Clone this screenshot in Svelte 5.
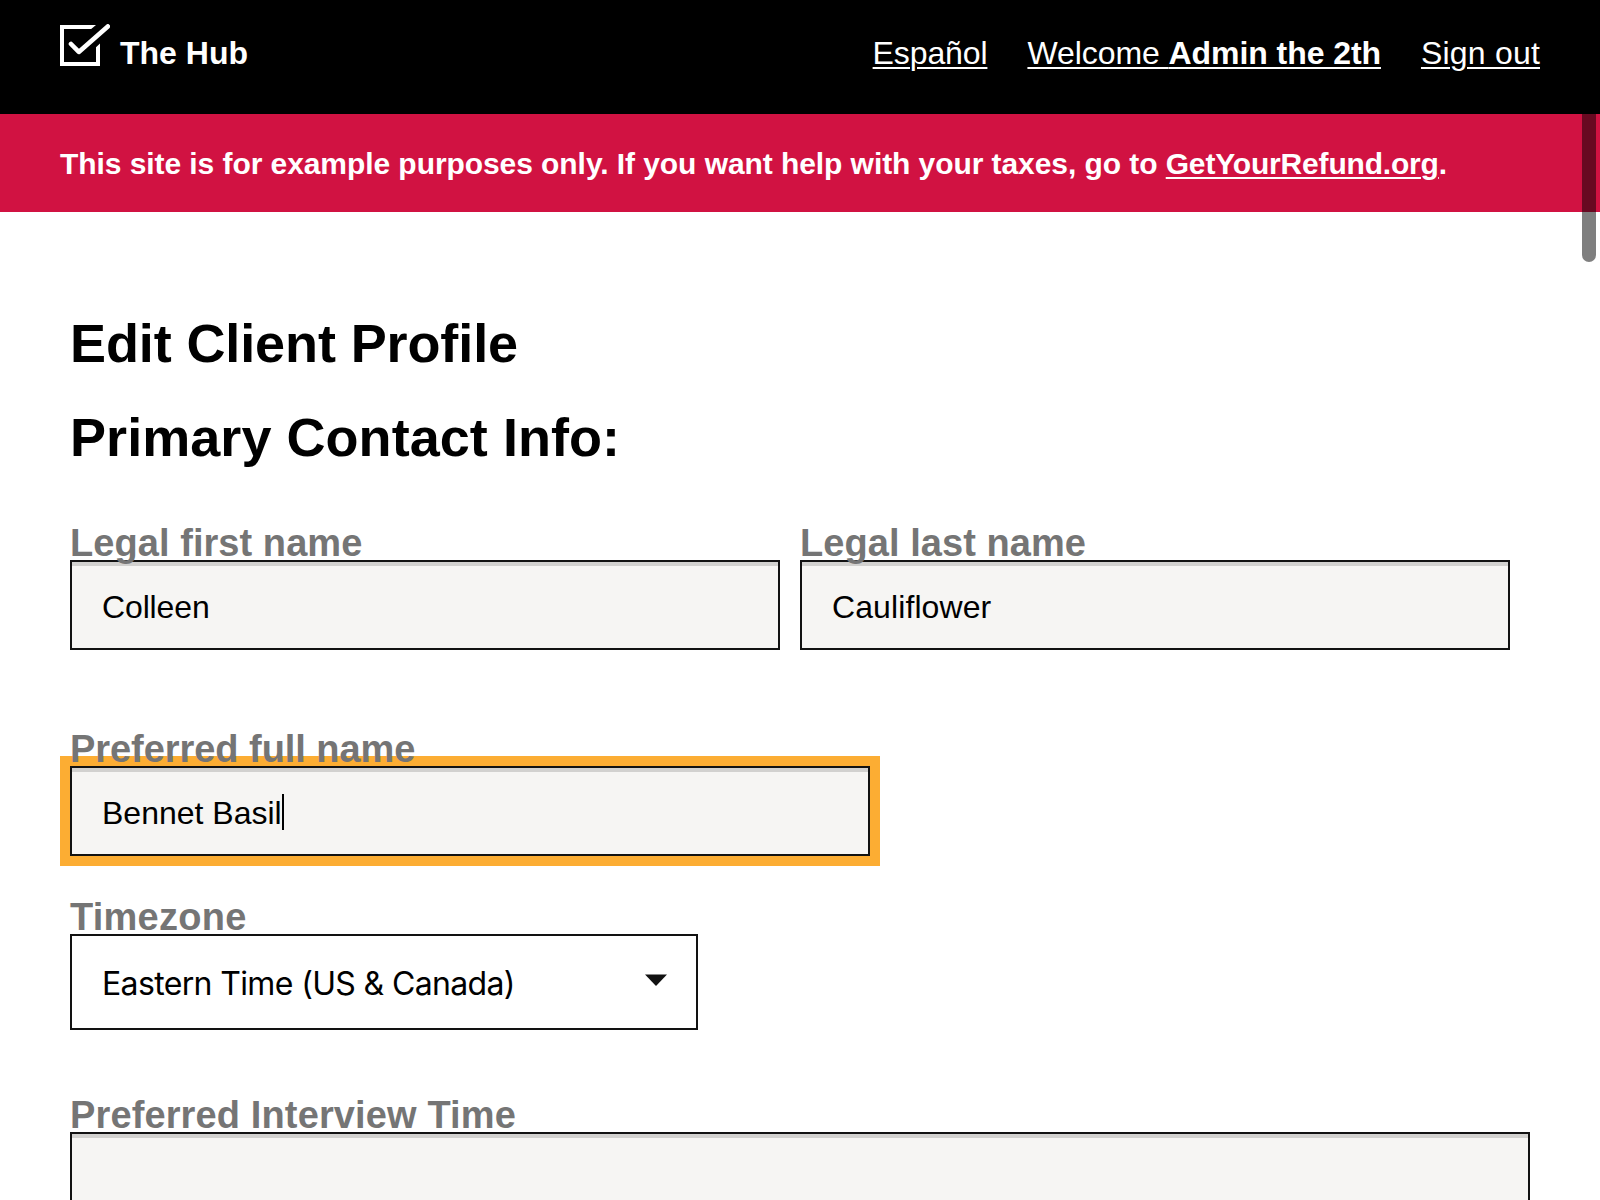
<script>
  const legalNames = [
    { id: 'first', label: 'Legal first name', value: 'Colleen' },
    { id: 'last', label: 'Legal last name', value: 'Cauliflower' },
  ];
</script>

<div class="page">
  <header>
    <a class="brand" href="#hub">
      <svg width="50" height="43" viewBox="0 0 50 43" fill="none" stroke="#fff">
        <path d="M36 1 31.2 5H4V38H36V23.3L40 19.6V42H0V1Z" fill="#fff" stroke="none" />
        <path d="M11 20 18.8 27.9 47.8 2.4" stroke-width="4.6" stroke-linecap="round" stroke-linejoin="round" />
      </svg>
      <span class="brand-name">The Hub</span>
    </a>
    <nav>
      <a class="es" href="#es">Español</a>
      <a class="welcome" href="#me">Welcome <b>Admin the 2th</b></a>
      <a class="out" href="#out">Sign out</a>
    </nav>
  </header>

  <div class="banner">
    <p>This site is for example purposes only. If you want help with your taxes, go to <a href="#gyr">GetYourRefund.org</a>.</p>
  </div>

  <main>
    <h1>Edit Client Profile</h1>
    <h2>Primary Contact Info:</h2>

    <div class="names">
      {#each legalNames as field (field.id)}
        <div class="field {field.id}">
          <label for={field.id}>{field.label}</label>
          <input class="box" id={field.id} value={field.value} />
        </div>
      {/each}
    </div>

    <div class="field preferred">
      <span class="label">Preferred full name</span>
      <div class="box focused"><span class="value">Bennet Basil</span><span class="caret"></span></div>
    </div>

    <div class="field timezone">
      <span class="label">Timezone</span>
      <div class="select">
        <span class="choice">Eastern Time (US &amp; Canada)</span>
        <svg width="22" height="12" viewBox="0 0 22 12"><path d="M0 .5H22L11 12Z" fill="#121212" /></svg>
      </div>
    </div>

    <div class="field interview">
      <label for="interview">Preferred Interview Time</label>
      <textarea class="box" id="interview"></textarea>
    </div>
  </main>
  <div class="scrollbar"></div>
</div>

<style>
  :global(body) {
    background: #fff;
    overflow: hidden;
  }
  .page {
    position: relative;
    height: 1200px;
    overflow: hidden;
    font-family: 'Liberation Sans', Arial, sans-serif;
    color: #000;
  }
  header {
    display: flex;
    justify-content: space-between;
    align-items: flex-start;
    box-sizing: border-box;
    height: 114px;
    padding: 24px 60px 0;
    background: #000;
  }
  a {
    color: #fff;
  }
  .brand {
    display: flex;
    gap: 10px;
    text-decoration: none;
  }
  .brand-name {
    padding-top: 9px;
    font-size: 32px;
    font-weight: 700;
    line-height: 40px;
  }
  nav {
    display: flex;
    gap: 40px;
    padding-top: 9px;
    font-size: 32px;
    line-height: 40px;
  }
  nav a, .banner a {
    text-decoration-thickness: 2px;
    text-underline-offset: 3px;
    white-space: pre;
  }
  .es {
    letter-spacing: -0.12px;
  }
  .welcome {
    letter-spacing: -0.07px;
  }
  .out {
    letter-spacing: 0.2px;
  }
  .banner {
    height: 98px;
    padding: 0 60px;
    background: #d11242;
    color: #fff;
    font-size: 30px;
    font-weight: 700;
    letter-spacing: -0.07px;
    line-height: 99px;
    white-space: nowrap;
  }
  .banner a {
    letter-spacing: -0.18px;
  }
  p {
    margin: 0;
  }
  main {
    padding: 101px 70px 0;
  }
  h1, h2 {
    margin: 0 0 34px;
    font-size: 54px;
    font-weight: 700;
    letter-spacing: -0.11px;
    line-height: 60px;
  }
  h2 {
    margin-bottom: 59px;
    letter-spacing: 0.05px;
  }
  .field {
    display: flex;
    flex-direction: column;
  }
  label, .label {
    position: relative;
    z-index: 1;
    align-self: flex-start;
    height: 34px;
    font-size: 38px;
    font-weight: 700;
    letter-spacing: 0.06px;
    line-height: 34px;
    color: #757575;
    white-space: nowrap;
  }
  .preferred .label {
    letter-spacing: -0.05px;
  }
  .timezone .label {
    letter-spacing: 0.25px;
  }
  .interview label {
    letter-spacing: 0.13px;
  }
  .box {
    box-sizing: border-box;
    width: 100%;
    height: 90px;
    margin: 0;
    padding: 5px 30px 0;
    border: 2px solid #121212;
    border-radius: 0;
    outline: none;
    background: #f6f5f3;
    box-shadow: inset 0 4px 0 #d2d1cf;
    font: 32px 'Liberation Sans', Arial, sans-serif;
    color: #000;
  }
  .first .box {
    letter-spacing: -0.14px;
  }
  .last .box {
    letter-spacing: 0.1px;
  }
  .names {
    display: grid;
    grid-template-columns: 710px 710px;
    gap: 20px;
  }
  .preferred {
    width: 800px;
    margin-top: 82px;
  }
  .focused {
    display: flex;
    align-items: center;
    box-shadow: inset 0 4px 0 #d2d1cf, 0 0 0 10px #fcad33;
  }
  .caret {
    width: 2px;
    height: 36px;
    margin-bottom: 4px;
    background: #000;
  }
  .timezone {
    width: 628px;
    margin-top: 44px;
  }
  .select {
    display: flex;
    align-items: center;
    justify-content: space-between;
    box-sizing: border-box;
    height: 96px;
    padding: 0 29px 0 30px;
    border: 2px solid #121212;
    font-family: Inter, sans-serif;
    font-size: 32px;
    line-height: 40px;
  }
  .choice {
    padding-top: 3px;
    letter-spacing: -0.64px;
  }
  .select svg {
    margin-bottom: 4px;
  }
  .interview {
    margin-top: 68px;
  }
  textarea {
    resize: none;
  }
  .interview .box {
    height: 200px;
  }
  .scrollbar {
    position: absolute;
    top: 114px;
    right: 4px;
    width: 14px;
    height: 148px;
    border-radius: 0 0 7px 7px;
    background: rgba(0, 0, 0, 0.5);
  }
</style>
